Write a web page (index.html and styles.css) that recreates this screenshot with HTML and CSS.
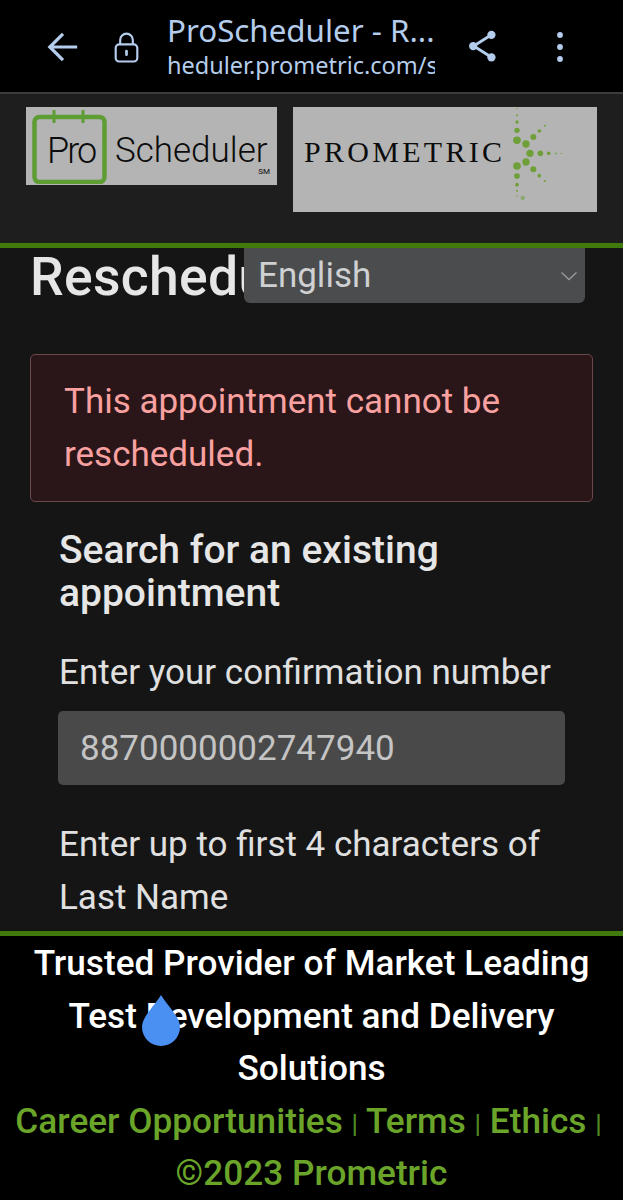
FILE: index.html
```html
<!DOCTYPE html>
<html lang="en">
<head>
<meta charset="utf-8">
<title>ProScheduler - Reschedule</title>
<link rel="stylesheet" href="styles.css">
</head>
<body>
<div class="screen">
  <div class="browser-bar">
    <svg class="icon back" viewBox="0 0 36 36"><path d="M33 18H5M18 4L4 18l14 14" fill="none" stroke="#b5cdec" stroke-width="3.4"/></svg>
    <svg class="icon lock" viewBox="0 0 30 36"><rect x="3" y="14" width="24" height="19" rx="4" fill="none" stroke="#b5cdec" stroke-width="2.4"/><path d="M8 14V9a7 7 0 0 1 14 0v5" fill="none" stroke="#b5cdec" stroke-width="2.4"/><rect x="13.5" y="20" width="3" height="7" rx="1.5" fill="#b5cdec"/></svg>
    <div class="url">
      <div class="url-title">ProScheduler - R...</div>
      <div class="url-addr">heduler.prometric.com/scheduling</div>
    </div>
    <svg class="icon share" viewBox="0 0 32 36"><path d="M25 5L6 17l19 12" fill="none" stroke="#b5cdec" stroke-width="3"/><circle cx="25" cy="5" r="4.4" fill="#b5cdec"/><circle cx="5.500" cy="17" r="4.400" fill="#b5cdec"/><circle cx="25" cy="29" r="4.400" fill="#b5cdec"/></svg>
    <svg class="icon more" viewBox="0 0 8 32"><circle cx="4" cy="4" r="2.900" fill="#b5cdec"/><circle cx="4" cy="16" r="2.900" fill="#b5cdec"/><circle cx="4" cy="28" r="2.900" fill="#b5cdec"/></svg>
  </div>

  <header class="site-header">
    <div class="logo logo-pro">
      <svg class="cal" viewBox="0 0 76 76"><rect x="2.500" y="9" width="70" height="65" rx="5" fill="none" stroke="#5e9c34" stroke-width="4.500"/><path d="M22 2v13M51 2v13" stroke="#5e9c34" stroke-width="3"/></svg>
      <span class="pro-word">Pro</span>
      <span class="sched-word">Scheduler</span>
      <span class="sm">SM</span>
    </div>
    <div class="logo logo-prometric">
      <span class="prom-word">PROMETRIC</span>
      <svg class="star" viewBox="24 35 910 315">
        <g fill="#6f9f38">
          <circle cx="695" cy="40" r="2"/><circle cx="695" cy="60" r="3"/><circle cx="695" cy="80" r="5"/><circle cx="695" cy="105" r="8"/><circle cx="695" cy="135" r="11.500"/>
          <circle cx="695" cy="212" r="11.500"/><circle cx="695" cy="242" r="8.500"/><circle cx="695" cy="268" r="5.500"/><circle cx="695" cy="286" r="3"/><circle cx="695" cy="302" r="2"/><circle cx="712" cy="308" r="6.500" opacity=".6"/>
          <circle cx="722" cy="146" r="11"/><circle cx="744" cy="125" r="9"/><circle cx="762" cy="107" r="5.500"/><circle cx="778" cy="91" r="3"/>
          <circle cx="734" cy="174" r="11"/><circle cx="765" cy="174" r="8.500"/><circle cx="790" cy="174" r="5.500"/><circle cx="812" cy="174" r="2.700"/><circle cx="827" cy="174" r="1.800"/>
          <circle cx="722" cy="200" r="11"/><circle cx="744" cy="222" r="9"/><circle cx="762" cy="241" r="5.500"/><circle cx="778" cy="257" r="3"/>
        </g>
      </svg>
    </div>
  </header>

  <main class="content">
    <h1 class="page-title">Reschedule</h1>
    <div class="lang-select"><span>English</span>
      <svg class="chev" viewBox="0 0 18 10"><path d="M1.500 1.500L9 8.500l7.500-7" fill="none" stroke="#9a9a9a" stroke-width="1.300"/></svg>
    </div>
    <div class="alert">This appointment cannot be rescheduled.</div>
    <form class="search">
      <h2 class="search-title">Search for an existing appointment</h2>
      <div class="label">Enter your confirmation number</div>
      <div class="input">8870000002747940</div>
      <div class="label label-last">Enter up to first 4 characters of Last Name</div>
    </form>
  </main>

  <footer class="site-footer">
    <div class="tagline">Trusted Provider of Market Leading Test Development and Delivery Solutions</div>
    <div class="links links-row"><a>Career Opportunities</a> <i>|</i> <a>Terms</a> <i>|</i> <a>Ethics</a> <i>|</i></div>
    <div class="links">©2023 Prometric</div>
  </footer>

  <svg class="drop" viewBox="0 0 40 52"><path d="M20 1C26 11 39 23 39 33a19 19 0 0 1-38 0C1 23 14 11 20 1z" fill="#4a90f2"/></svg>
</div>
</body>
</html>
```

FILE: styles.css
```css
* { box-sizing: border-box; }
html, body { margin: 0; padding: 0; background: #000; }
.screen {
  position: relative;
  width: 623px;
  height: 1200px;
  overflow: hidden;
  display: flex;
  flex-direction: column;
  font-family: Roboto, "Liberation Sans", sans-serif;
}
.browser-bar {
  height: 94px;
  flex: none;
  background: #000;
  border-bottom: 2px solid #3c3c3c;
  display: flex;
  align-items: center;
  padding: 0 0 0 46px;
}
.icon { flex: none; display: block; }
.back { width: 34px; height: 34px; margin-top: 1px; }
.lock { width: 27px; height: 36px; margin-left: 33px; margin-top: 3px; }
.url { width: 268px; margin-left: 27px; overflow: hidden; white-space: nowrap; margin-top: 2px; }
.url-title { font-family: "Noto Sans", sans-serif; font-size: 31.300px; line-height: 37px; color: #b5cdec; }
.url-addr { font-family: "Noto Sans", sans-serif; font-size: 23.500px; line-height: 33px; color: #b5cdec; }
.share { width: 30px; height: 36px; margin-left: 33px; margin-top: 1px; }
.more { width: 8px; height: 32px; margin-left: 58px; margin-top: 1px; }

.site-header {
  height: 154px;
  flex: none;
  background: #1e1e1e;
  border-bottom: 5px solid #3f7a0a;
  display: flex;
  align-items: flex-start;
  gap: 16px;
  padding: 13px 0 0 26px;
}
.logo { background: #b4b4b4; position: relative; flex: none; color: #0c0c0c; }
.logo-pro { width: 251px; height: 78px; }
.cal { position: absolute; left: 6px; top: 1px; width: 76px; height: 76px; }
.pro-word { position: absolute; left: 21px; top: 22px; font-size: 36px; line-height: 44px; font-weight: 300; letter-spacing: -2px; }
.sched-word { position: absolute; left: 89px; top: 22px; font-size: 35px; line-height: 44px; font-weight: 300; }
.sm { position: absolute; right: 7px; top: 60px; font-size: 8px; line-height: 10px; }
.logo-prometric { width: 304px; height: 105px; }
.prom-word { position: absolute; left: 11px; top: 27px; font-family: "Liberation Serif", serif; font-size: 30px; line-height: 36px; letter-spacing: 3.300px; }
.star { position: absolute; left: 0; top: 0; width: 304px; height: 105px; }

.content {
  flex: 1;
  position: relative;
  background: #151515;
  border-bottom: 5px solid #3f7a0a;
  padding: 0 30px;
  overflow: hidden;
  min-height: 0;
}
.page-title {
  margin: 0;
  font-size: 53.500px;
  line-height: 58px;
  font-weight: 500;
  letter-spacing: .3px;
  color: #e6e6e6;
  white-space: nowrap;
}
.lang-select {
  position: absolute;
  left: 244px;
  top: 0;
  width: 341px;
  height: 55px;
  background: #4b4c4e;
  border-radius: 0 0 6px 6px;
  display: flex;
  align-items: center;
  justify-content: space-between;
  padding: 0 7px 0 14px;
  font-size: 35px;
  color: #cfd0d2;
}
.chev { width: 18px; height: 10px; }
.alert {
  margin-top: 48px;
  height: 148px;
  padding: 20px 33px 0;
  background: #2a1618;
  border: 1px solid #6b484b;
  border-radius: 5px;
  font-size: 35px;
  line-height: 53px;
  color: #f9a0a0;
}
.search { padding: 27px 28px 0 28px; }
.search-title { margin: 0 0 0 1px; font-size: 39px; line-height: 43px; font-weight: 500; color: #e6e6e6; }
.label { font-size: 35px; line-height: 53px; color: #e0e0e0; margin: 31px 0 0 1px; white-space: nowrap; }
.label-last { white-space: normal; margin-top: 33px; }
.input {
  height: 74px;
  margin-top: 12px;
  background: #494949;
  border-radius: 5px;
  padding: 0 22px;
  display: flex;
  align-items: center;
  font-size: 35px;
  color: #c4c4c4;
}

.site-footer {
  height: 264px;
  flex: none;
  background: #000;
  text-align: center;
  font-size: 35.200px;
  line-height: 52.500px;
  font-weight: 500;
  padding-top: 1px;
}
.tagline { color: #fff; padding: 0 20px; }
.links { color: #6aa52a; white-space: nowrap; }
.links-row { padding-right: 6px; }
.links i { font-style: normal; font-size: 26px; line-height: 0; color: #4f8a24; }
.drop { position: absolute; left: 141px; top: 994px; width: 40px; height: 52px; }
```
